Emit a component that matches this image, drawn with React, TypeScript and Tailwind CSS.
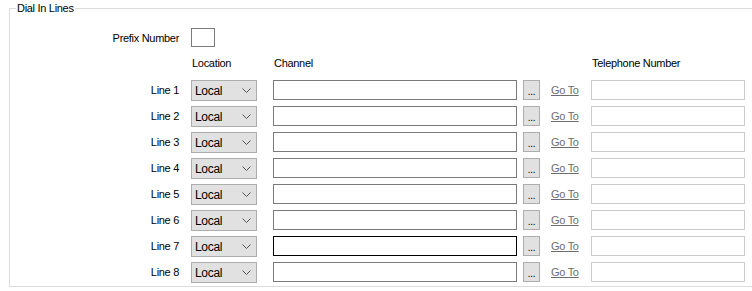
const lines = [1, 2, 3, 4, 5, 6, 7, 8]

function Chevron() {
  return (
    <svg width="9" height="5" viewBox="0 0 9 5" className="block">
      <polyline points="0.5,0.5 4.5,4.5 8.5,0.5" fill="none" stroke="#555555" strokeWidth="1" />
    </svg>
  )
}

function LineRow({ n }: { n: number }) {
  const focused = n === 7
  return (
    <div className="flex h-[26px] items-start">
      <div className="w-[170px] pt-[3px] pr-px text-right">Line {n}</div>
      <div className="ml-[11px] flex h-[21px] w-[66px] items-center justify-between border border-[#adadad] bg-[#e1e1e1] pl-[3px] pr-[5px]">
        <span className="text-[12px] tracking-[-0.3px]">Local</span>
        <Chevron />
      </div>
      <div
        className={
          focused
            ? 'ml-[16px] h-[20px] w-[244px] border border-[#000000] bg-white'
            : 'ml-[16px] h-[20px] w-[244px] border border-[#7a7a7a] bg-white'
        }
      />
      <div className="ml-[6px] flex h-[20px] w-[17px] items-end justify-center border border-[#adadad] bg-[#e1e1e1] pb-[2px] text-[10px] leading-none">
        ...
      </div>
      <div className="ml-[11px] w-[40px] pt-[3px] text-[#6d6d6d] underline">Go To</div>
      <div className="h-[20px] w-[154px] border border-[#cccccc] bg-white" />
    </div>
  )
}

export default function App() {
  return (
    <div className="h-[291px] w-[752px] overflow-hidden bg-white pl-[9px] pt-px font-['Liberation_Sans',Arial,sans-serif] text-[11px] leading-[14px] tracking-[-0.3px] text-black">
      <fieldset className="h-[286px] w-[770px] border border-[#dcdcdc]">
        <legend className="ml-[6px] px-px">Dial In Lines</legend>
        <div className="mt-[13px] flex h-[19px] items-center">
          <div className="w-[170px] pr-px text-right">Prefix Number</div>
          <div className="ml-[11px] h-[19px] w-[24px] border border-[#7a7a7a] bg-white" />
        </div>
        <div className="mt-[9px] flex h-[24px]">
          <div className="ml-[182px] w-[82px]">Location</div>
          <div className="w-[318px]">Channel</div>
          <div>Telephone Number</div>
        </div>
        {lines.map((n) => (
          <LineRow key={n} n={n} />
        ))}
      </fieldset>
    </div>
  )
}
